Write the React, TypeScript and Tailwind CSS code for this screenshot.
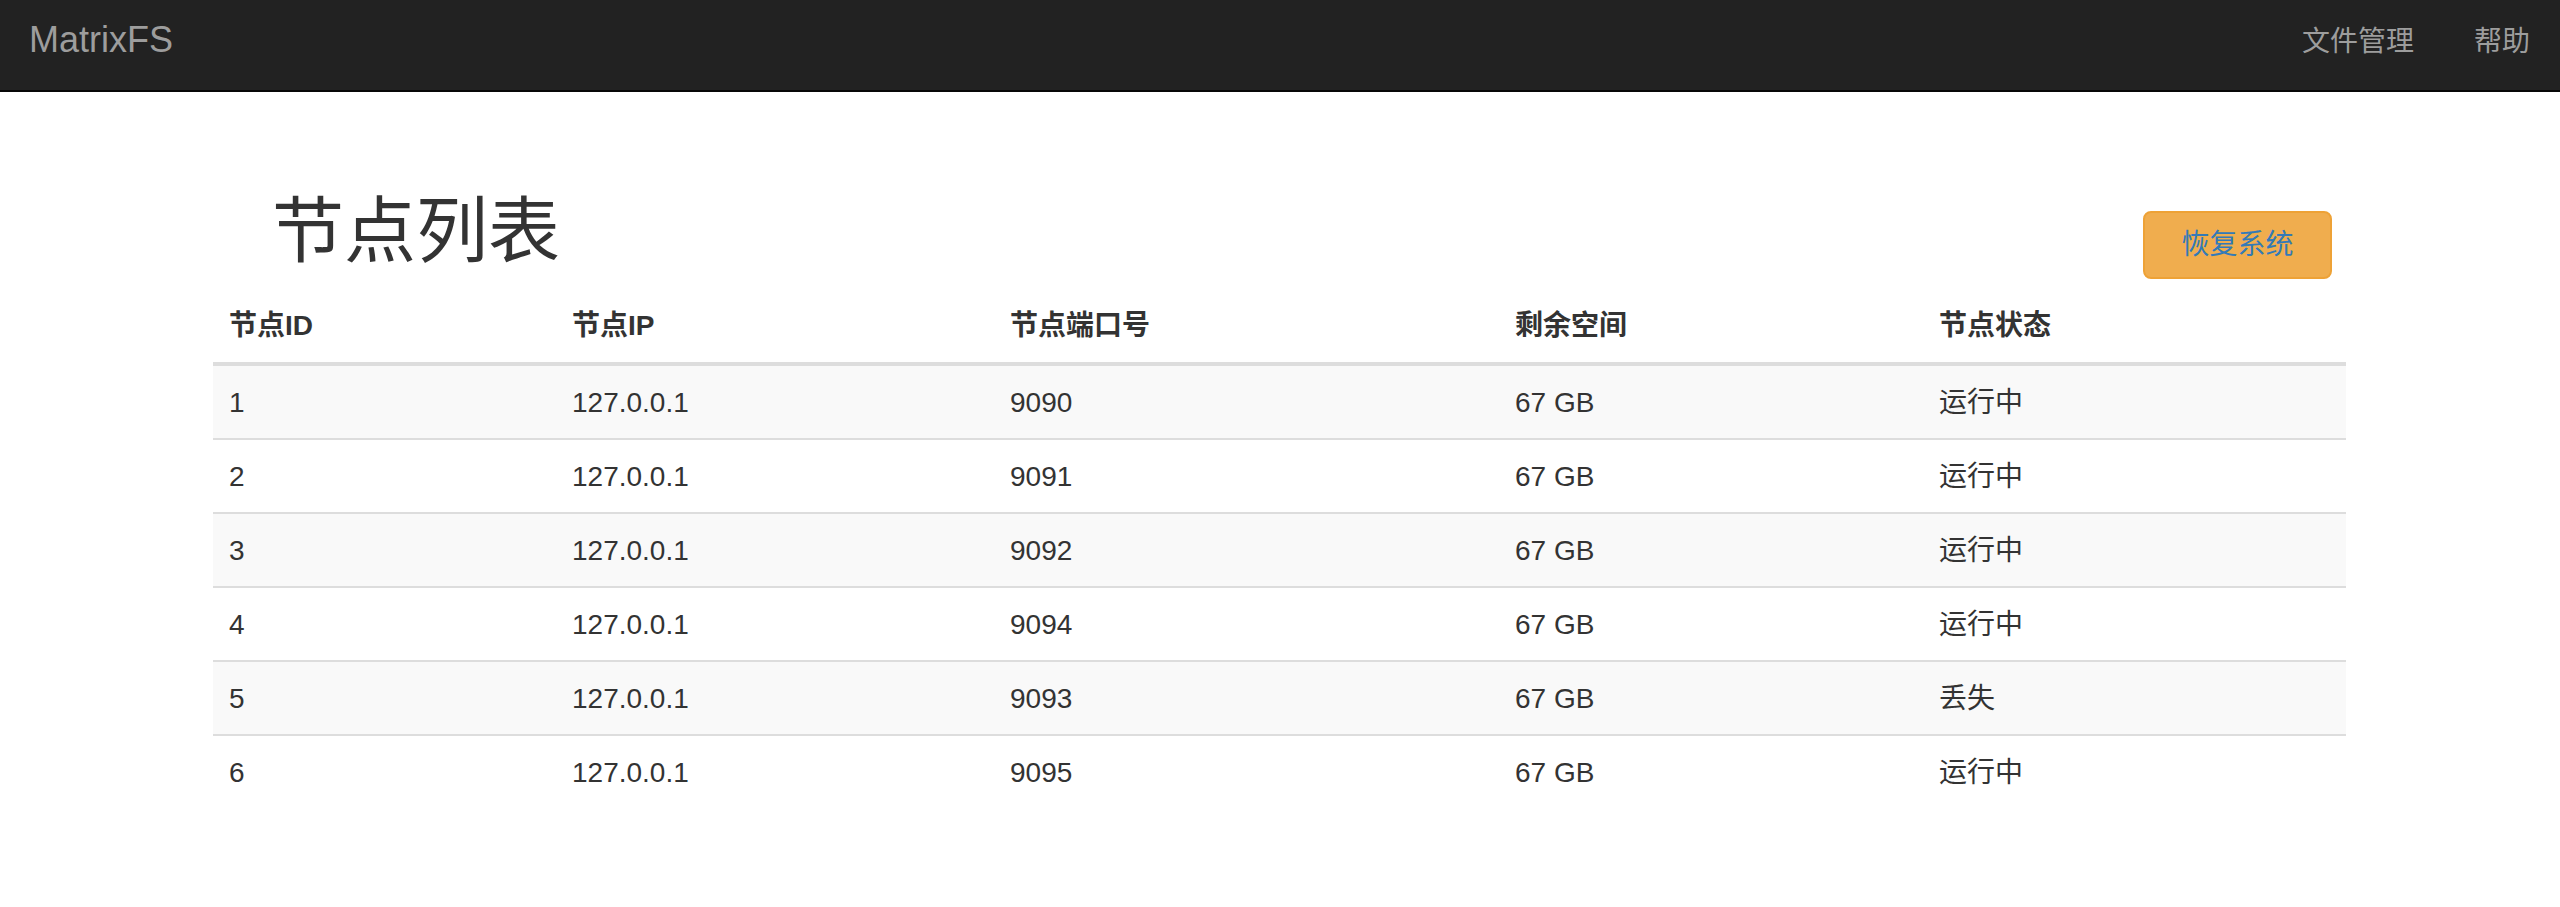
import React from "react";

const nodes = [
  { id: 1, ip: "127.0.0.1", port: 9090, free: "67 GB", status: "运行中" },
  { id: 2, ip: "127.0.0.1", port: 9091, free: "67 GB", status: "运行中" },
  { id: 3, ip: "127.0.0.1", port: 9092, free: "67 GB", status: "运行中" },
  { id: 4, ip: "127.0.0.1", port: 9094, free: "67 GB", status: "运行中" },
  { id: 5, ip: "127.0.0.1", port: 9093, free: "67 GB", status: "丢失" },
  { id: 6, ip: "127.0.0.1", port: 9095, free: "67 GB", status: "运行中" },
];

const headers = ["节点ID", "节点IP", "节点端口号", "剩余空间", "节点状态"];
const widths = ["w-[343px]", "w-[438px]", "w-[505px]", "w-[424px]", "w-[423px]"];

export default function App() {
  return (
    <div className="min-h-screen bg-white text-[#333] font-['Liberation_Sans','Noto_Sans_CJK_SC',sans-serif]">
      {/* navbar */}
      <nav className="h-[92px] bg-[#222] border-b-2 border-[#080808] flex items-start justify-between">
        <a className="pl-[29px] pt-[20px] text-[36px] leading-[40px] text-[#9d9d9d]">MatrixFS</a>
        <ul className="flex">
          <li className="px-[30px] pt-[22px] text-[28px] leading-[40px] text-[#9d9d9d]">文件管理</li>
          <li className="px-[30px] pt-[22px] text-[28px] leading-[40px] text-[#9d9d9d]">帮助</li>
        </ul>
      </nav>

      <main className="w-[2133px] ml-[213px] pt-[98px]">
        <div className="flex items-start justify-between">
          <h1 className="pl-[59px] pt-[2px] mb-[19px] text-[72px] leading-[79px] font-normal">节点列表</h1>
          <button className="mt-[21px] mr-[14px] w-[189px] h-[68px] rounded-[8px] border-2 border-[#eea236] bg-[#f0ad4e] text-[28px] leading-[40px] text-[#337ab7]">
            恢复系统
          </button>
        </div>

        <table className="w-full table-fixed border-separate border-spacing-0 text-[28px]">
          <thead>
            <tr>
              {headers.map((h, i) => (
                <th
                  key={h}
                  className={`${widths[i]} p-4 text-left leading-[40px] font-bold border-b-4 border-[#ddd]`}
                >
                  {h}
                </th>
              ))}
            </tr>
          </thead>
          <tbody>
            {nodes.map((n, i) => {
              const cell = `px-4 pt-[17px] pb-[15px] leading-[40px] ${i > 0 ? "border-t-2 border-[#ddd]" : ""}`;
              return (
                <tr key={n.id} className={i % 2 === 0 ? "bg-[#f9f9f9]" : ""}>
                  <td className={cell}>{n.id}</td>
                  <td className={cell}>{n.ip}</td>
                  <td className={cell}>{n.port}</td>
                  <td className={cell}>{n.free}</td>
                  <td className={cell}>{n.status}</td>
                </tr>
              );
            })}
          </tbody>
        </table>
      </main>
    </div>
  );
}
